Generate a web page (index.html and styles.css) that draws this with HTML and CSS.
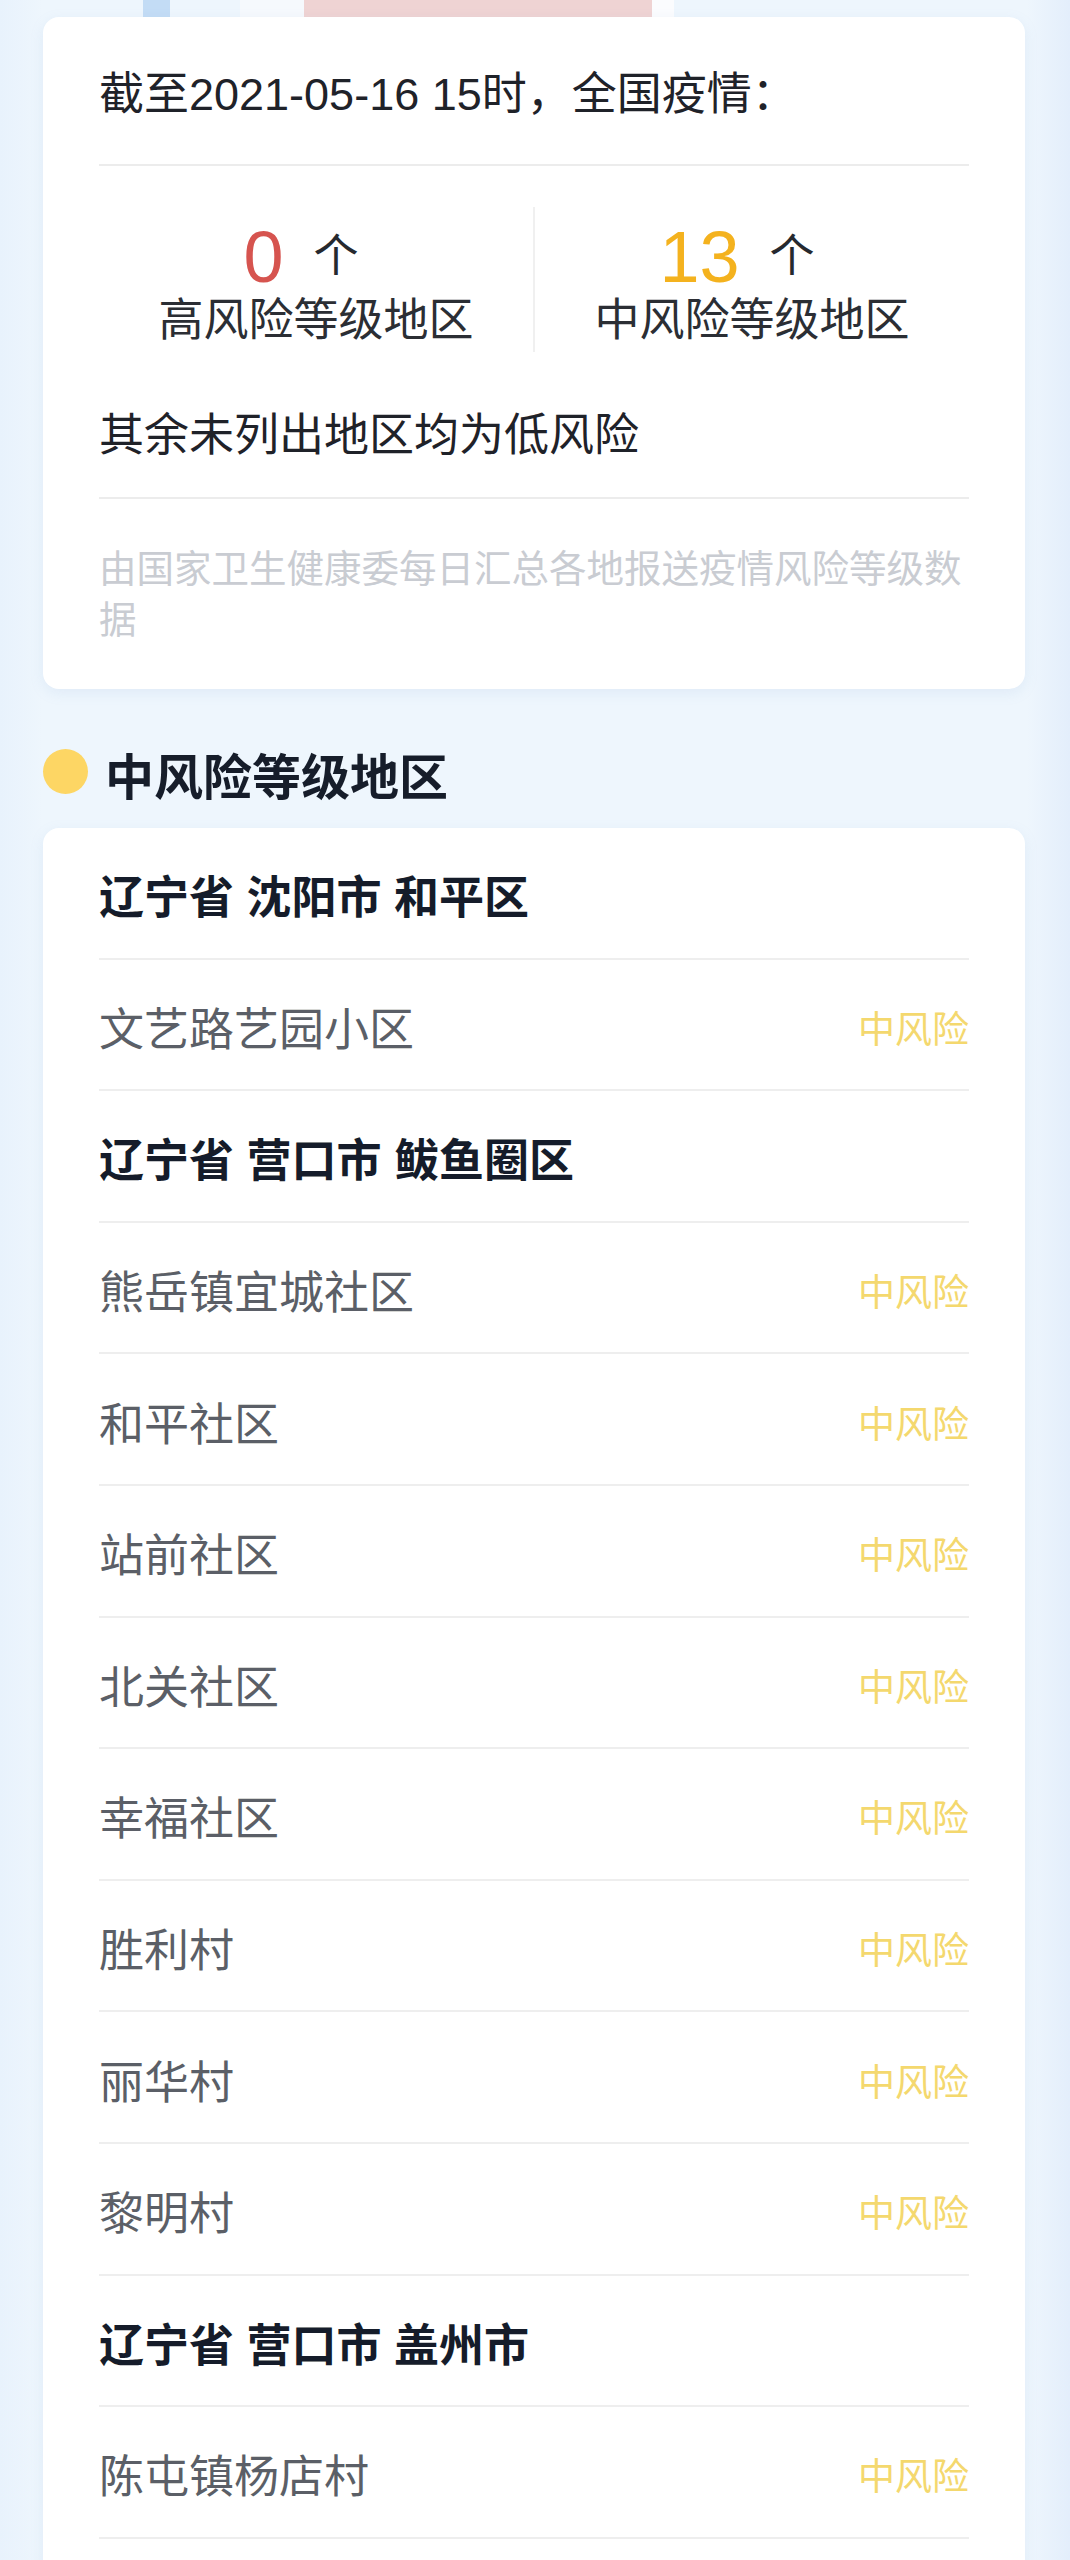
FILE: index.html
```html
<!DOCTYPE html>
<html lang="zh-CN">
<head>
<meta charset="utf-8">
<title>风险等级查询</title>
<link rel="stylesheet" href="styles.css">
</head>
<body>
<div class="page">
  <div class="banner"></div>

  <section class="card summary">
    <div class="title">截至2021-05-16 15时，全国疫情：</div>
    <div class="stats">
      <div class="stat">
        <div class="count"><span class="num high">0</span><span class="unit">个</span></div>
        <div class="label">高风险等级地区</div>
      </div>
      <div class="stat">
        <div class="count"><span class="num mid">13</span><span class="unit">个</span></div>
        <div class="label">中风险等级地区</div>
      </div>
    </div>
    <div class="rest">其余未列出地区均为低风险</div>
    <div class="note">由国家卫生健康委每日汇总各地报送疫情风险等级数据</div>
  </section>

  <h2 class="section-title"><span class="dot"></span>中风险等级地区</h2>

  <section class="card list">
    <div class="row head">辽宁省 沈阳市 和平区</div>
    <div class="row item"><span class="name">文艺路艺园小区</span><span class="tag">中风险</span></div>
    <div class="row head">辽宁省 营口市 鲅鱼圈区</div>
    <div class="row item"><span class="name">熊岳镇宜城社区</span><span class="tag">中风险</span></div>
    <div class="row item"><span class="name">和平社区</span><span class="tag">中风险</span></div>
    <div class="row item"><span class="name">站前社区</span><span class="tag">中风险</span></div>
    <div class="row item"><span class="name">北关社区</span><span class="tag">中风险</span></div>
    <div class="row item"><span class="name">幸福社区</span><span class="tag">中风险</span></div>
    <div class="row item"><span class="name">胜利村</span><span class="tag">中风险</span></div>
    <div class="row item"><span class="name">丽华村</span><span class="tag">中风险</span></div>
    <div class="row item"><span class="name">黎明村</span><span class="tag">中风险</span></div>
    <div class="row head">辽宁省 营口市 盖州市</div>
    <div class="row item"><span class="name">陈屯镇杨店村</span><span class="tag">中风险</span></div>
  </section>
</div>
</body>
</html>
```

FILE: styles.css
```css
* { box-sizing: border-box; }

html, body {
  margin: 0;
  padding: 0;
}

body {
  background: linear-gradient(90deg, #e8f2fc 0, #eef6fd 4%, #eef6fd 96%, #e3eefb 100%);
  font-family: "Liberation Sans", "Noto Sans CJK SC", sans-serif;
  color: #222;
}

.page {
  padding: 0 45px 0 43px;
}

.banner {
  height: 17px;
  margin: 0 -45px 0 -43px;
  background: linear-gradient(90deg,
    transparent 0, transparent 143px,
    #c3dcf5 143px, #c3dcf5 170px,
    transparent 170px, transparent 240px,
    #f6f9fd 240px, #f6f9fd 304px,
    #efd3d3 304px, #efd3d3 652px,
    #fbfcfe 652px, #fbfcfe 674px,
    transparent 674px);
}

.card {
  background: #fff;
  border-radius: 16px;
  box-shadow: 0 4px 14px rgba(120, 160, 205, 0.13);
  padding: 0 56px;
}

/* summary card */
.title {
  padding: 48px 0 39px;
  font-size: 45px;
  line-height: 60px;
  color: #1f2229;
  border-bottom: 2px solid #ececec;
}

.stats {
  display: flex;
  margin-top: 41px;
}

.stat {
  flex: 1;
  display: flex;
  flex-direction: column;
  align-items: center;
  padding-top: 14px;
  height: 145px;
}

.stat + .stat {
  border-left: 2px solid #f0f0f0;
}

.count {
  display: flex;
  align-items: center;
  height: 72px;
  padding-right: 30px;
}

.num {
  font-size: 72px;
  line-height: 72px;
}

.num.high { color: #d6544f; }
.num.mid { color: #f4b21e; }

.unit {
  font-size: 45px;
  line-height: 56px;
  color: #26292f;
  margin-left: 30px;
}

.label {
  font-size: 45px;
  line-height: 56px;
  color: #2b2e34;
}

.rest {
  margin-top: 54px;
  padding-bottom: 31px;
  font-size: 45px;
  line-height: 60px;
  color: #1f2229;
  border-bottom: 2px solid #ececec;
}

.note {
  padding: 45px 0 43px;
  font-size: 37.5px;
  line-height: 51px;
  color: #c9ccd2;
}

/* section heading */
.section-title {
  display: flex;
  align-items: center;
  margin: 59px 0 20px;
  font-size: 49px;
  line-height: 60px;
  font-weight: 700;
  color: #161d2a;
}

.dot {
  width: 45px;
  height: 45px;
  border-radius: 50%;
  background: #fdd664;
  margin-right: 17px;
  margin-bottom: 13px;
}

/* list card */
.list {
  padding-bottom: 40px;
}

.row {
  display: flex;
  align-items: center;
  justify-content: space-between;
  height: 131.6px;
  padding-top: 13px;
  border-bottom: 2px solid #eeeeee;
  font-size: 45px;
  line-height: 56px;
}

.row.head {
  font-weight: 700;
  color: #151c2a;
}

.row.item .name {
  color: #5b5f67;
}

.tag {
  font-size: 37px;
  color: #f4d86e;
}
```
